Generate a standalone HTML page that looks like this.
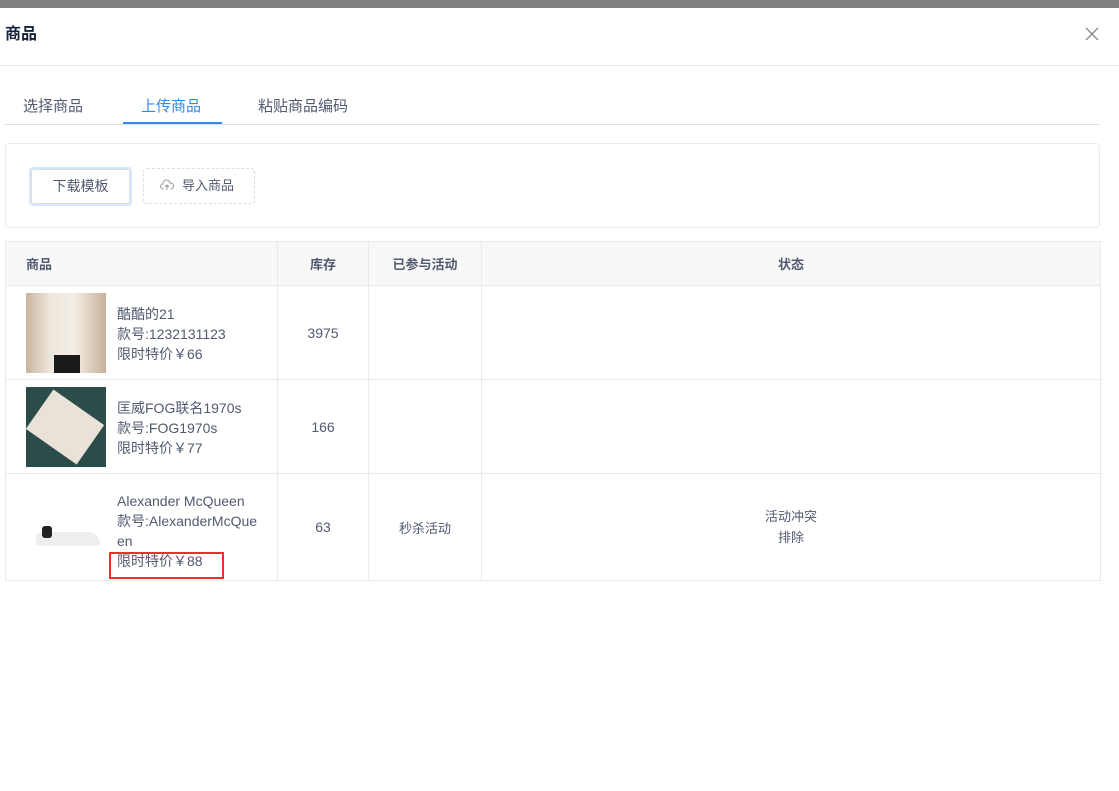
<!DOCTYPE html>
<html><head><meta charset="utf-8"><style>
*{margin:0;padding:0;box-sizing:border-box}
body{width:1119px;height:791px;background:#fff;font-family:"Liberation Sans","Noto Sans CJK SC",sans-serif;position:relative;overflow:hidden;color:#515a6e}
.a{position:absolute}
.top{left:0;top:0;width:1119px;height:8px;background:#7f7f7f}
td,th{border-right:1px solid #e8eaec;border-bottom:1px solid #e8eaec;font-size:13px}
td{font-size:14px}
table{border-collapse:collapse;position:absolute;left:5px;top:241px;border-left:1px solid #e8eaec;border-top:1px solid #e8eaec}
th{background:#f8f8f9;height:44px;color:#515a6e;font-weight:bold}
.img{position:absolute;left:20px;width:80px;height:80px}
.info{position:absolute;left:111px;line-height:20px;font-size:14px;color:#515a6e;white-space:nowrap}
</style></head><body>
<div class="a top"></div>
<div class="a" style="left:5px;top:25px;font-size:16px;font-weight:bold;color:#17233d;line-height:20px">商品</div>
<svg class="a" style="left:1085px;top:27px" width="14" height="14"><path d="M1 1L13 13M13 1L1 13" stroke="#888" stroke-width="1.3"/></svg>
<div class="a" style="left:0;top:65px;width:1119px;height:1px;background:#e8eaec"></div>
<div class="a" style="left:23px;top:95px;font-size:15px;color:#515a6e">选择商品</div>
<div class="a" style="left:141px;top:95px;font-size:15px;color:#2d8cf0">上传商品</div>
<div class="a" style="left:258px;top:95px;font-size:15px;color:#515a6e">粘贴商品编码</div>
<div class="a" style="left:5px;top:124px;width:1095px;height:1px;background:#dcdee2"></div>
<div class="a" style="left:123px;top:122px;width:99px;height:2px;background:#2d8cf0"></div>
<div class="a" style="left:5px;top:143px;width:1095px;height:85px;border:1px solid #e8eaec;border-radius:4px"></div>
<div class="a" style="left:29px;top:167px;width:103px;height:39px;border:2px solid #d5e6fb;border-radius:4px"></div>
<div class="a" style="left:31px;top:169px;width:99px;height:35px;border:1px solid #dcdee2;border-radius:3px;font-size:14px;text-align:center;line-height:33px">下载模板</div>
<div class="a" style="left:143px;top:168px;width:112px;height:36px;border:1px dashed #dcdee2;border-radius:4px;font-size:13px;line-height:34px;padding-left:38px">导入商品</div>
<svg class="a" style="left:160px;top:179px" width="14" height="12"><path d="M3.5 10H3A2.5 2.5 0 0 1 3 5 3.5 3.5 0 0 1 10 4 2.8 2.8 0 0 1 11 10h-.5M7 11V6M5 8l2-2 2 2" fill="none" stroke="#999" stroke-width="1"/></svg>
<table>
<tr><th style="width:272px;text-align:left;padding-left:20px">商品</th><th style="width:91px">库存</th><th style="width:113px">已参与活动</th><th style="width:619px">状态</th></tr>
<tr style="height:94px"><td style="position:relative"><div class="img" style="top:7px;background:linear-gradient(90deg,#c9b49e,#ece6dc 30%,#f3eee6 60%,#c7b19b)"><div style="position:absolute;left:28px;top:62px;width:26px;height:18px;background:#1a1a1a"></div></div><div class="info" style="top:18px">酷酷的21<br>款号:1232131123<br>限时特价￥66</div></td><td style="text-align:center">3975</td><td></td><td></td></tr>
<tr style="height:94px"><td style="position:relative"><div class="img" style="top:7px;background:#2b4c48;overflow:hidden"><div style="position:absolute;left:8px;top:16px;width:62px;height:48px;background:#e8e2d8;transform:rotate(35deg)"></div></div><div class="info" style="top:18px">匡威FOG联名1970s<br>款号:FOG1970s<br>限时特价￥77</div></td><td style="text-align:center">166</td><td></td><td></td></tr>
<tr style="height:107px"><td style="position:relative"><div class="img" style="top:22px"><div style="position:absolute;left:10px;top:36px;width:64px;height:14px;background:#eee;border-radius:8px 18px 4px 4px"></div><div style="position:absolute;left:16px;top:30px;width:10px;height:12px;background:#222;border-radius:3px"></div></div><div class="info" style="top:17px">Alexander McQueen<br>款号:AlexanderMcQue<br>en<br>限时特价￥88</div><div style="position:absolute;left:103px;top:78px;width:115px;height:27px;border:2px solid #ee2e2e"></div></td><td style="text-align:center">63</td><td style="text-align:center;font-size:13px">秒杀活动</td><td style="text-align:center;line-height:21px;font-size:13px">活动冲突<br>排除</td></tr>
</table>
</body></html>
